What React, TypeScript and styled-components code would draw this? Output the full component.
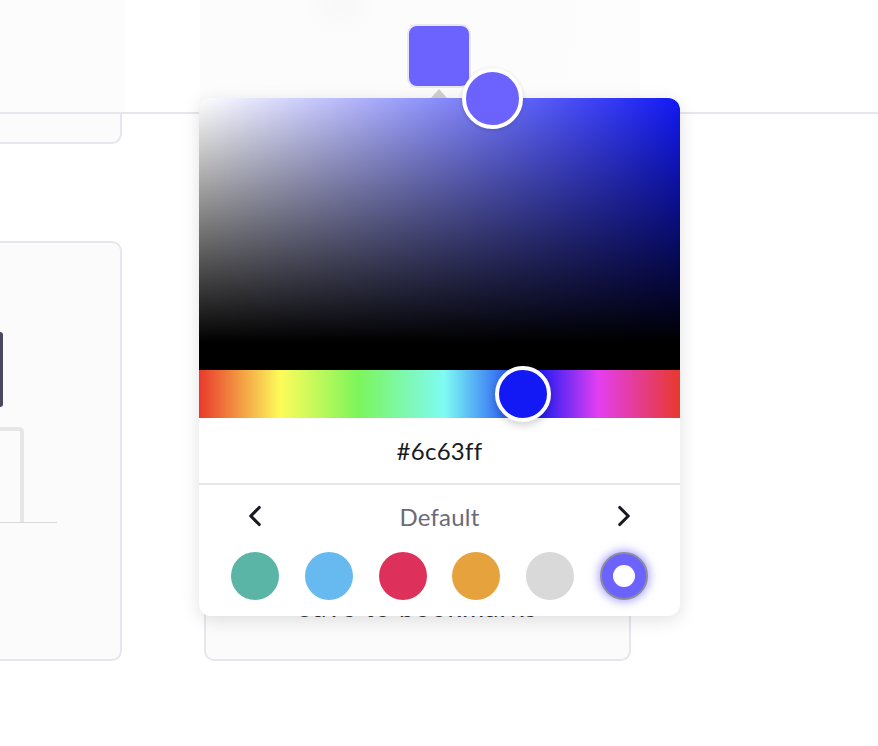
import React from "react";
import styled, { createGlobalStyle } from "styled-components";
import { ChevronLeft, ChevronRight } from "lucide-react";

const GlobalStyle = createGlobalStyle`
    *, *::before, *::after {
        box-sizing: border-box;
    }
    html, body {
        margin: 0;
        padding: 0;
        background: #ffffff;
        font-family: "Lato", "Noto Sans", sans-serif;
        overflow: hidden;
    }
`;

const presets = ["#5bb5a7", "#66baf0", "#dd315b", "#e6a23c", "#d9d9d9", "#6c63ff"];

export default function App() {
    return (
        <Page>
            <GlobalStyle />
            <TopBar>
                <TopColumn shade="#fcfcfc" />
                <TopColumn shade="#ffffff" />
                <TriggerColumn>
                    <Trigger />
                    <Caret />
                </TriggerColumn>
                <TopColumn shade="#ffffff" />
            </TopBar>
            <StubRow>
                <CardStub />
            </StubRow>
            <CardRow>
                <SideCard>
                    <DarkBar />
                    <FrameBox />
                    <BaseLine />
                </SideCard>
                <MainCard>
                    <CardLabel>Save to bookmarks</CardLabel>
                </MainCard>
            </CardRow>

            <Popover>
                <SatArea>
                    <SatPointer />
                </SatArea>
                <HueBar>
                    <HuePointer />
                </HueBar>
                <HexRow>#6c63ff</HexRow>
                <Divider />
                <PresetNav>
                    <NavButton>
                        <ChevronLeft size={34} strokeWidth={2.2} />
                    </NavButton>
                    <PresetName>Default</PresetName>
                    <NavButton>
                        <ChevronRight size={34} strokeWidth={2.2} />
                    </NavButton>
                </PresetNav>
                <SwatchRow>
                    {presets.map((c, i) => (
                        <Swatch key={c} color={c} selected={i === presets.length - 1}>
                            {i === presets.length - 1 && <SwatchDot />}
                        </Swatch>
                    ))}
                </SwatchRow>
            </Popover>
        </Page>
    );
}

const Page = styled.div`
    position: relative;
    width: 878px;
    height: 746px;
    overflow: hidden;
    display: flex;
    flex-direction: column;
    & > * {
        flex-shrink: 0;
    }
`;

const TopBar = styled.div`
    height: 114px;
    display: grid;
    grid-template-columns: 126px 74px 440px 1fr;
    border-bottom: 2px solid #e6e6ec;
`;

const TopColumn = styled.div<{ shade: string }>`
    background: ${(p) => p.shade};
`;

const TriggerColumn = styled.div`
    background: radial-gradient(circle at 32% 0%, #f8f8f8 0, #fcfcfc 40px, #fdfdfd 100%);
    display: flex;
    flex-direction: column;
    align-items: center;
    padding-top: 24px;
    padding-left: 38px;
`;

const Trigger = styled.div`
    width: 64px;
    height: 64px;
    background: #6c63ff;
    border: 2px solid #e8e8ee;
    border-radius: 10px;
`;

const Caret = styled.div`
    margin-top: 1px;
    width: 0;
    height: 0;
    border-left: 9px solid transparent;
    border-right: 9px solid transparent;
    border-bottom: 10px solid #d0d0d0;
`;

const StubRow = styled.div`
    display: flex;
`;

const CardStub = styled.div`
    width: 134px;
    height: 30px;
    margin-left: -12px;
    background: #fbfbfc;
    border: 2px solid #e6e6ec;
    border-top: none;
    border-radius: 0 0 10px 10px;
`;

const CardRow = styled.div`
    margin-top: 97px;
    display: flex;
    gap: 82px;
`;

const SideCard = styled.div`
    width: 134px;
    height: 420px;
    margin-left: -12px;
    padding-top: 89px;
    background: #fbfbfc;
    border: 2px solid #e6e6ec;
    border-radius: 10px;
    display: flex;
    flex-direction: column;
    align-items: flex-start;
`;

const DarkBar = styled.div`
    width: 30px;
    height: 75px;
    margin-left: -17px;
    background: #4a4860;
    border-radius: 3px;
`;

const FrameBox = styled.div`
    width: 40px;
    height: 95px;
    margin-top: 20px;
    margin-left: -6px;
    border: 4px solid #e6e6e6;
    border-bottom: none;
    border-radius: 0 5px 0 0;
`;

const BaseLine = styled.div`
    width: 60px;
    height: 1px;
    margin-left: 7px;
    background: #d8d8d8;
`;

const MainCard = styled.div`
    width: 427px;
    height: 420px;
    background: #fbfbfc;
    border: 2px solid #e6e6ec;
    border-radius: 10px;
    display: flex;
    flex-direction: column;
    align-items: center;
    justify-content: flex-end;
    padding-bottom: 36px;
`;

const CardLabel = styled.div`
    font-size: 27px;
    line-height: 33px;
    color: #30303c;
    letter-spacing: 0.9px;
`;

const Popover = styled.div`
    position: absolute;
    left: 199px;
    top: 98px;
    width: 481px;
    height: 518px;
    background: #ffffff;
    border-radius: 12px;
    box-shadow: 0 4px 18px rgba(0, 0, 0, 0.12);
    display: flex;
    flex-direction: column;
`;

const SatArea = styled.div`
    position: relative;
    height: 272px;
    flex-shrink: 0;
    border-radius: 12px 12px 0 0;
    background: linear-gradient(to top, #000 0%, #000 10%, rgba(0, 0, 0, 0) 100%),
        linear-gradient(to right, #ffffff 0%, #1219f5 100%);
`;

const SatPointer = styled.div`
    position: absolute;
    left: 263px;
    top: -30px;
    width: 61px;
    height: 61px;
    border-radius: 50%;
    background: #6c63ff;
    border: 4px solid #ffffff;
    box-shadow: 0 1px 4px rgba(0, 0, 0, 0.15);
`;

const HueBar = styled.div`
    position: relative;
    height: 48px;
    flex-shrink: 0;
    background: linear-gradient(
        to right,
        #e8392c 0%,
        #fdfc5a 17%,
        #7cf55a 33%,
        #7ffbf3 51%,
        #1a3df5 67%,
        #1219f5 70%,
        #e33ff1 83%,
        #e8392c 100%
    );
`;

const HuePointer = styled.div`
    position: absolute;
    left: 296px;
    top: -4px;
    width: 56px;
    height: 56px;
    border-radius: 50%;
    background: #1219f5;
    border: 4px solid #ffffff;
    box-shadow: 0 3px 8px rgba(0, 0, 0, 0.2);
`;

const HexRow = styled.div`
    height: 65px;
    flex-shrink: 0;
    display: flex;
    align-items: center;
    justify-content: center;
    font-size: 24px;
    color: #1a1a24;
    letter-spacing: 0.3px;
`;

const Divider = styled.div`
    height: 2px;
    flex-shrink: 0;
    background: #e6e6ec;
`;

const PresetNav = styled.div`
    height: 62px;
    flex-shrink: 0;
    display: flex;
    align-items: center;
    justify-content: space-between;
    padding: 0 39px;
`;

const NavButton = styled.div`
    width: 34px;
    height: 34px;
    display: flex;
    align-items: center;
    justify-content: center;
    color: #1a1a24;
`;

const PresetName = styled.div`
    font-size: 24px;
    color: #6b6b78;
    letter-spacing: 0.2px;
`;

const SwatchRow = styled.div`
    display: flex;
    justify-content: space-between;
    padding: 5px 32px 16px 32px;
`;

const Swatch = styled.div<{ color: string; selected?: boolean }>`
    width: 48px;
    height: 48px;
    border-radius: 50%;
    background: ${(p) => p.color};
    display: flex;
    align-items: center;
    justify-content: center;
    border: ${(p) => (p.selected ? "2px solid #8c8c9c" : "none")};
    box-shadow: ${(p) => (p.selected ? "0 0 8px 2px rgba(108, 99, 255, 0.55)" : "none")};
`;

const SwatchDot = styled.div`
    width: 22px;
    height: 22px;
    border-radius: 50%;
    background: #ffffff;
`;
